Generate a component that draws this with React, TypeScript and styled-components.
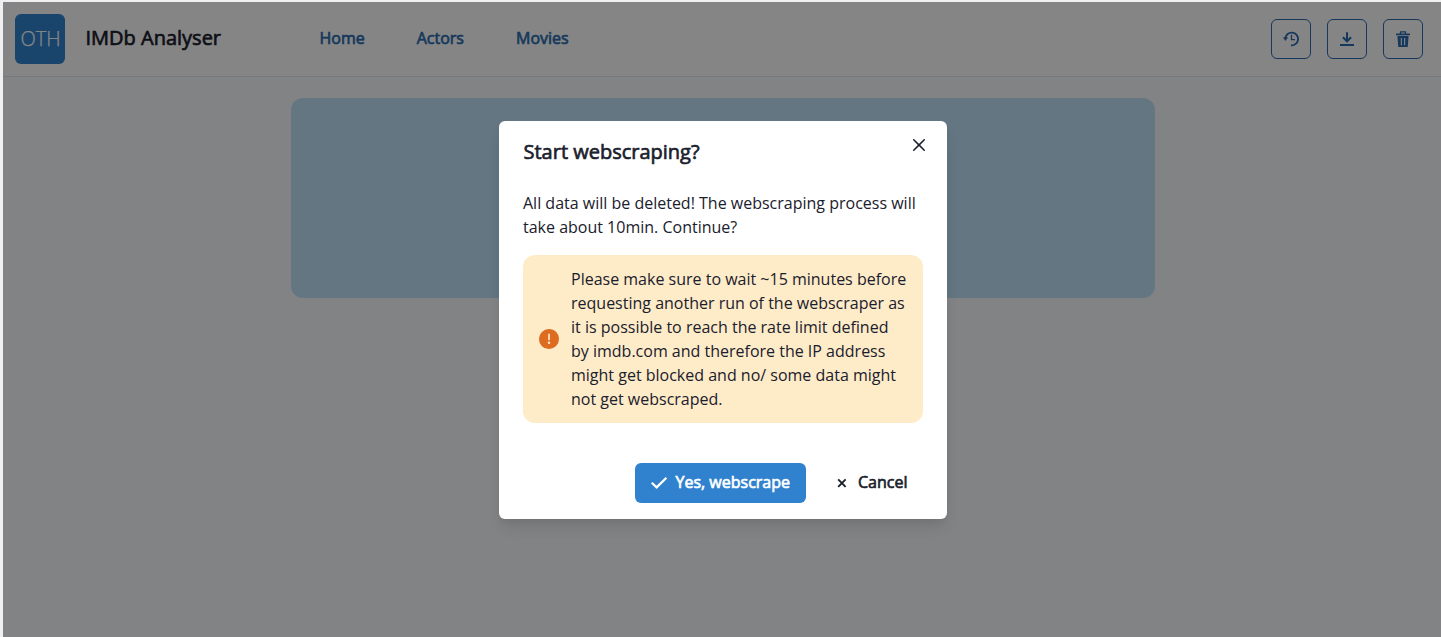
import React from "react";
import styled, { createGlobalStyle } from "styled-components";

const GlobalStyle = createGlobalStyle`
  *, *::before, *::after { box-sizing: border-box; }
  body {
    margin: 0;
    background: #eef0f1;
    color: #1a202c;
    font-family: "Open Sans", "Noto Sans", sans-serif;
    font-size: 16px;
    line-height: 24px;
    overflow: hidden;
  }
  button { font: inherit; color: inherit; margin: 0; padding: 0; border: 0; background: none; }
`;

const headingFont = `
  font-family: "Open Sans", sans-serif;
  font-weight: 400;
  -webkit-text-stroke: 0.65px currentColor;
`;

const Page = styled.div`
  height: 100vh;
  padding: 2px 0 0 3px;
`;

const Shell = styled.div`
  position: relative;
  height: 100%;
  background: #fafbfd;
`;

const Header = styled.header`
  display: flex;
  align-items: center;
  height: 75px;
  padding: 0 18px 0 12px;
  background: #ffffff;
  border-bottom: 1px solid #e2e8f0;
`;

const Logo = styled.div`
  display: flex;
  align-items: center;
  justify-content: center;
  width: 50px;
  height: 50px;
  border-radius: 6px;
  background: #3182ce;
  color: #ffffff;
  font-family: "Open Sans", sans-serif;
  font-weight: 300;
  font-size: 20px;
  -webkit-text-stroke: 0.25px currentColor;
  padding-left: 1px;
`;

const Brand = styled.h1`
  ${headingFont}
  width: 234px;
  margin: 0 0 2px 20.5px;
  font-size: 20px;
  line-height: 24px;
`;

const Nav = styled.nav`
  display: flex;
  flex: 1;
  gap: 52px;
  padding-bottom: 2px;
`;

const NavLink = styled.a`
  ${headingFont}
  color: #2b6cb0;
`;

const Actions = styled.div`
  display: flex;
  gap: 16px;
`;

const IconButton = styled.button`
  display: flex;
  align-items: center;
  justify-content: center;
  width: 40px;
  height: 40px;
  border: 1px solid #2b6cb0;
  border-radius: 6px;
  color: #2b6cb0;
`;

const Panel = styled.section`
  width: 864px;
  height: 200px;
  margin: 21px 0 0 288px;
  border-radius: 12px;
  background: #bee3f8;
`;

const Overlay = styled.div`
  position: absolute;
  inset: 0;
  display: flex;
  align-items: flex-start;
  padding: 119px 0 0 496px;
  background: rgba(0, 0, 0, 0.48);
`;

const Dialog = styled.section`
  position: relative;
  width: 448px;
  height: 398px;
  border-radius: 6px;
  background: #ffffff;
  box-shadow: 0 10px 15px -3px rgba(0, 0, 0, 0.1), 0 4px 6px -2px rgba(0, 0, 0, 0.05);
`;

const DialogTitle = styled.h2`
  ${headingFont}
  margin: 0;
  padding: 15.5px 24px 16.5px 24.5px;
  font-size: 20px;
  line-height: 30px;
`;

const CloseButton = styled.button`
  position: absolute;
  top: 8px;
  right: 12px;
  display: flex;
  align-items: center;
  justify-content: center;
  width: 32px;
  height: 32px;
`;

const DialogBody = styled.div`
  padding: 8px 24px;
`;

const Message = styled.p`
  margin: 0;
`;

const Alert = styled.div`
  display: flex;
  align-items: center;
  gap: 12px;
  margin-top: 16px;
  padding: 12px 16px;
  border-radius: 12px;
  background: #feebc8;
`;

const AlertIcon = styled.svg`
  flex: none;
  width: 20px;
  height: 20px;
  color: #dd6b20;
`;

const AlertText = styled.p`
  flex: 1;
  margin: 0;
`;

const Footer = styled.footer`
  display: flex;
  justify-content: flex-end;
  gap: 12px;
  padding: 32px 24px 16px;
`;

const FooterButton = styled.button<{ $primary?: boolean }>`
  ${headingFont}
  display: flex;
  align-items: center;
  gap: 8.5px;
  height: 40px;
  padding: 0 15.5px 0 16px;
  border-radius: 6px;
  background: ${(p) => (p.$primary ? "#3182ce" : "transparent")};
  color: ${(p) => (p.$primary ? "#ffffff" : "#1a202c")};
`;

const ButtonLabel = styled.span`
  padding-bottom: 3px;
`;

export default function App() {
  return (
    <>
      <GlobalStyle />
      <Page>
        <Shell>
          <Header>
            <Logo>OTH</Logo>
            <Brand>IMDb Analyser</Brand>
            <Nav>
              <NavLink>Home</NavLink>
              <NavLink>Actors</NavLink>
              <NavLink>Movies</NavLink>
            </Nav>
            <Actions>
              <IconButton aria-label="History">
                <svg width="24" height="24" viewBox="0 0 24 24" fill="none" stroke="currentColor" strokeWidth="1.8">
                  <path d="M6.3 11.4A6.4 6.4 0 1 1 12 18.3" />
                  <path d="M12.5 7.8V12.7H16" strokeWidth="1.3" />
                  <path d="M4 10.2H9L6.4 14Z" fill="currentColor" stroke="none" />
                </svg>
              </IconButton>
              <IconButton aria-label="Download">
                <svg width="24" height="24" viewBox="0 0 24 24" fill="none" stroke="currentColor" strokeWidth="2">
                  <path d="M12 5.2V14M7.9 10.3L12 14.3L16.1 10.3M5 18H19" />
                </svg>
              </IconButton>
              <IconButton aria-label="Delete">
                <svg width="24" height="24" viewBox="0 0 24 24" fill="none" stroke="currentColor">
                  <path d="M9.5 7.3V4.8H14.5V7.3" strokeWidth="1.3" />
                  <path d="M5 7.4H19" strokeWidth="1.7" />
                  <path fillRule="evenodd" stroke="none" fill="currentColor" d="M6.4 9.1H17.6L16.7 20H7.3ZM9.8 11V18.2H10.9V11ZM13.1 11V18.2H14.2V11Z" />
                </svg>
              </IconButton>
            </Actions>
          </Header>
          <Panel />
          <Overlay>
            <Dialog role="dialog">
              <DialogTitle>Start webscraping?</DialogTitle>
              <CloseButton aria-label="Close">
                <svg width="12" height="12" viewBox="0 0 24 24" fill="currentColor">
                  <path d="M.439,21.44a1.5,1.5,0,0,0,2.122,2.121L11.823,14.3a.25.25,0,0,1,.354,0l9.262,9.263a1.5,1.5,0,1,0,2.122-2.121L14.3,12.177a.25.25,0,0,1,0-.354l9.263-9.262A1.5,1.5,0,0,0,21.439.44L12.177,9.7a.25.25,0,0,1-.354,0L2.561.44A1.5,1.5,0,0,0,.439,2.561L9.7,11.823a.25.25,0,0,1,0,.354Z" />
                </svg>
              </CloseButton>
              <DialogBody>
                <Message>All data will be deleted! The webscraping process will take about 10min. Continue?</Message>
                <Alert role="alert">
                  <AlertIcon viewBox="0 0 24 24" fill="currentColor">
                    <path d="M11.983,0a12.206,12.206,0,0,0-8.51,3.653A11.8,11.8,0,0,0,0,12.207,11.779,11.779,0,0,0,11.8,24h.214A12.111,12.111,0,0,0,24,11.791h0A11.766,11.766,0,0,0,11.983,0ZM10.5,16.542a1.476,1.476,0,0,1,1.449-1.53h.027a1.527,1.527,0,0,1,1.523,1.47,1.475,1.475,0,0,1-1.449,1.53h-.027A1.529,1.529,0,0,1,10.5,16.542ZM11,12.5v-6a1,1,0,0,1,2,0v6a1,1,0,1,1-2,0Z" />
                  </AlertIcon>
                  <AlertText>
                    Please make sure to wait ~15 minutes before requesting another run of the webscraper as it is possible to reach the rate limit defined by imdb.com and therefore the IP address might get blocked and no/ some data might not get webscraped.
                  </AlertText>
                </Alert>
              </DialogBody>
              <Footer>
                <FooterButton $primary>
                  <svg width="16" height="16" viewBox="0 0 16 16" fill="none" stroke="currentColor" strokeWidth="2.2">
                    <path d="M0.8 7.8l4.8 4.6L15.4 2.8" />
                  </svg>
                  <ButtonLabel>Yes, webscrape</ButtonLabel>
                </FooterButton>
                <FooterButton>
                  <svg width="16" height="16" viewBox="0 0 16 16" fill="none" stroke="currentColor" strokeWidth="1.9">
                    <path d="M4.2 4.4l7.4 7.4M11.6 4.4l-7.4 7.4" />
                  </svg>
                  <ButtonLabel>Cancel</ButtonLabel>
                </FooterButton>
              </Footer>
            </Dialog>
          </Overlay>
        </Shell>
      </Page>
    </>
  );
}
